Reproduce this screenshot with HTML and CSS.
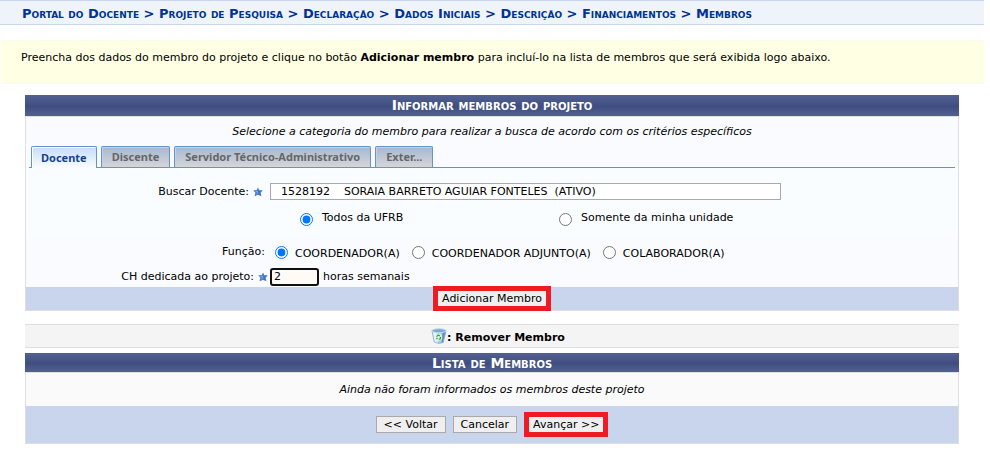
FILE: index.html
```
<!DOCTYPE html>
<html lang="pt-BR">
<head>
    <meta charset="UTF-8">
    <meta name="viewport" content="width=device-width, initial-scale=1.0">
    <title>Membros do Projeto</title>
    <link rel="stylesheet" href="styles.css">
</head>
<body>
    <svg class="symbols" aria-hidden="true">
        <symbol id="star" viewBox="0 0 10 10">
            <path d="M5 0.5 L6.3 3.2 L9.7 3.3 L7.6 5.7 L8.4 9.3 L5 7.8 L1.6 9.3 L2.4 5.7 L0.3 3.3 L3.7 3.2 Z" fill="#3f73cf"/>
            <path d="M5 1.5 L5.3 4 L2 4 L4 5.5 L3 8 L5 6.6 Z" fill="#7ea6e8"/>
        </symbol>
    </svg>

    <h2 class="path">Portal do Docente &gt; Projeto de Pesquisa &gt; Declaração &gt; Dados Iniciais &gt; Descrição &gt; Financiamentos &gt; Membros</h2>

    <div class="help">
        Preencha dos dados do membro do projeto e clique no botão <b>Adicionar membro</b> para incluí-lo na lista de membros que será exibida logo abaixo.
    </div>

    <form class="content">
        <section class="panel">
            <h3 class="caption">Informar membros do projeto</h3>
            <p class="hint">Selecione a categoria do membro para realizar a busca de acordo com os critérios específicos</p>

            <div class="tabs" role="tablist">
                <button type="button" class="tab active" role="tab" aria-selected="true">Docente</button>
                <button type="button" class="tab" role="tab" aria-selected="false">Discente</button>
                <button type="button" class="tab" role="tab" aria-selected="false">Servidor Técnico-Administrativo</button>
                <button type="button" class="tab" role="tab" aria-selected="false">Exter...</button>
            </div>

            <div class="tab-body" role="tabpanel">
                <div class="row">
                    <div class="name">
                        <label for="docente">Buscar Docente:</label>
                        <svg class="star" aria-hidden="true"><use href="#star"/></svg>
                    </div>
                    <input type="text" id="docente" class="search" value="1528192 &nbsp;&nbsp; SORAIA BARRETO AGUIAR FONTELES &nbsp;(ATIVO)">
                </div>
                <div class="scope">
                    <label><input type="radio" name="escopo" checked> <span>Todos da UFRB</span></label>
                    <label><input type="radio" name="escopo"> <span>Somente da minha unidade</span></label>
                </div>
            </div>

            <div class="row roles" role="radiogroup" aria-labelledby="funcao">
                <div class="name" id="funcao">Função:</div>
                <label><input type="radio" name="funcao" checked> <span>COORDENADOR(A)</span></label>
                <label><input type="radio" name="funcao"> <span>COORDENADOR ADJUNTO(A)</span></label>
                <label><input type="radio" name="funcao"> <span>COLABORADOR(A)</span></label>
            </div>
            <div class="row hours">
                <div class="name">
                    <label for="ch">CH dedicada ao projeto:</label>
                    <svg class="star" aria-hidden="true"><use href="#star"/></svg>
                </div>
                <input type="text" id="ch" value="2">
                <span>horas semanais</span>
            </div>

            <div class="actions add">
                <span class="marked"><button type="button">Adicionar Membro</button></span>
            </div>
        </section>

        <div class="legend">
            <svg class="trash" viewBox="0 0 16 16" aria-hidden="true">
                <path d="M1 2.5 L3.2 14 Q8 16.6 12.2 14.4 L15 3 Z" fill="#a9cdee"/>
                <path d="M1.5 4 L3.6 14 Q5 15 7 15.2 L5.5 4 Z" fill="#e6f3fc"/>
                <path d="M11.5 4 L10.5 15 L12 14.3 L14.8 4 Z" fill="#5d8fc4"/>
                <path d="M1 2.5 L3.2 14 Q8 16.6 12.2 14.4 L15 3" fill="none" stroke="#86a9cf" stroke-width="0.8"/>
                <ellipse cx="8" cy="2.7" rx="7" ry="2" fill="#7da8d2" stroke="#c3d9ec"/>
                <circle cx="7.6" cy="9.2" r="3.6" fill="#ddf2e4"/>
                <path d="M5.6 8.6 L7.2 7 L9 8 M9.7 9 L9.2 11 L7.8 11.2 M6.4 11 L5.5 10" fill="none" stroke="#27a52c" stroke-width="1.2"/>
            </svg>
            <span>: Remover Membro</span>
        </div>

        <section class="list">
            <h3 class="caption">Lista de Membros</h3>
            <p class="empty">Ainda não foram informados os membros deste projeto</p>
            <div class="actions">
                <button type="button">&lt;&lt; Voltar</button>
                <button type="button">Cancelar</button>
                <span class="marked"><button type="button">Avançar &gt;&gt;</button></span>
            </div>
        </section>
    </form>
</body>
</html>
```
FILE: styles.css
```
* {
    box-sizing: border-box;
}

body {
    margin: 0 6px 0 0;
    background-color: #ffffff;
    color: #000000;
    font-family: Verdana, "DejaVu Sans", sans-serif;
    font-size: 11px;
    line-height: 16px;
}

h2, h3, p {
    margin: 0;
}

button, input {
    font: inherit;
    color: inherit;
}

input[type="radio"] {
    width: 13px;
    height: 13px;
    margin: 0;
}

.symbols {
    display: none;
}

.path {
    padding: 5px 22px 2px;
    background-color: #eff3fa;
    border-top: 1px solid #c8d5ec;
    border-bottom: 1px solid #c8d5ec;
    color: #003395;
    font-size: 13px;
    font-variant: small-caps;
    white-space: nowrap;
}

.help {
    margin: 15px 0 11px 1px;
    padding: 9px 20px 17px;
    background-color: #ffffe4;
    border: 1px solid #fafafa;
    border-width: 1px 0;
}

.content {
    margin: 0 25px;
}

.caption {
    padding: 2px 0 3px;
    background: linear-gradient(#536192, #404d80 55%, #536192);
    color: #ffffff;
    font-size: 14px;
    font-variant: small-caps;
    text-align: center;
}

.panel {
    border: 1px solid #dedfe3;
    border-top: 0;
    background-color: #fafbfe;
}

.panel .caption {
    margin: 0 -1px;
    border-bottom: 1px solid #dedfe3;
}

.hint {
    padding: 7px 0 6px;
    font-style: italic;
    text-align: center;
}

/* tabs */
.tabs {
    display: flex;
    gap: 4px;
    margin: 0 3px;
    padding-left: 2px;
    border-bottom: 1px solid #6593cf;
}

.tab {
    height: 21px;
    padding: 0 10px;
    border: 1px solid #6593cf;
    border-bottom: 0;
    border-radius: 2px 2px 0 0;
    background: linear-gradient(#a4b8d3, #d6d6d6);
    box-shadow: inset 1px 1px 0 #c2d3e8;
    color: #666666;
    font-family: Tahoma, "Noto Sans", sans-serif;
    font-weight: bold;
    line-height: 20px;
}

.tab.active {
    height: 22px;
    margin-bottom: -1px;
    padding: 0 9px;
    background: linear-gradient(#c5dcfb, #fafdff);
    box-shadow: inset 1px 1px 0 #ffffff;
    color: #15428b;
}

.tab-body {
    padding: 15px 0 10px;
    background-color: #fafdff;
}

/* form rows */
.row {
    display: flex;
    align-items: center;
}

.name {
    display: flex;
    flex: 0 0 244px;
    justify-content: flex-end;
    align-items: center;
    gap: 4px;
}

.star {
    width: 10px;
    height: 10px;
}

.tab-body .name {
    padding-right: 7px;
}

.search {
    width: 511px;
    height: 17px;
    padding: 0 10px;
    border: 1px solid #a9a9a9;
    background-color: #ffffff;
}

.scope {
    display: flex;
    margin-top: 10px;
    padding-left: 274px;
}

.scope label {
    display: flex;
    align-items: center;
    gap: 9px;
    flex: 0 0 259px;
    height: 18px;
}

.scope span {
    padding-bottom: 2px;
}

.roles {
    height: 28px;
}

.roles .name {
    padding-right: 5px;
}

.roles label {
    display: flex;
    align-items: center;
    gap: 7px;
    margin: 0 12px 0 5px;
}

.roles label + label {
    margin-left: 0;
}

.roles label span {
    padding-top: 3px;
}

.hours {
    height: 21px;
}

.hours .name {
    padding-right: 2px;
}

.hours input {
    width: 49px;
    height: 18px;
    padding: 0 2px;
    margin-right: 4px;
    border: 2px solid #101010;
    border-radius: 3px;
    background-color: #fefaf6;
}

.actions {
    display: flex;
    justify-content: center;
    align-items: center;
    gap: 7px;
    height: 37px;
    background-color: #c8d5ec;
}

.actions button {
    height: 17px;
    padding: 0 7px;
    border: 1px solid #a9a9a9;
    background-color: #efefef;
    line-height: 15px;
}

.actions.add {
    height: 23px;
}

/* red frame round the main button */
.marked {
    display: flex;
    border: 5px solid #ed1c24;
}

.actions .marked button {
    height: 15px;
    padding: 0 4px;
    border: 0;
}

.legend {
    display: flex;
    justify-content: center;
    align-items: center;
    height: 24px;
    margin: 13px 0 5px;
    padding-left: 12px;
    border: 1px solid #dedfe3;
    border-width: 1px 0;
    background-color: #f4f4f4;
    font-weight: bold;
}

.legend span {
    padding-top: 4px;
}

.trash {
    width: 16px;
    height: 16px;
}

.list {
    border: 1px solid #dedfe3;
    border-top: 0;
    background-color: #fafafa;
}

.list .caption {
    margin: 0 -1px;
    padding: 2px 0 1px;
    border-bottom: 1px solid #dedfe3;
}

.empty {
    padding: 9px 0 8px;
    font-style: italic;
    text-align: center;
}
```
